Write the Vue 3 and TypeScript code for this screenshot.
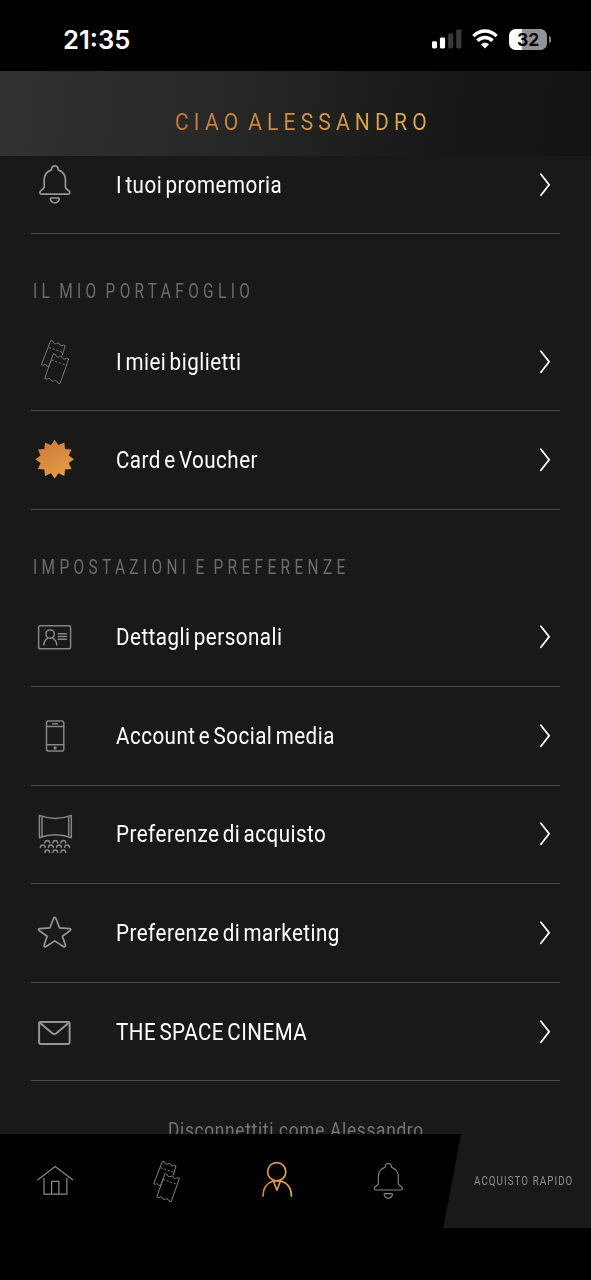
<script setup lang="ts">
import { computed } from 'vue'

type IconName = 'bell' | 'tickets' | 'burst' | 'card' | 'phone' | 'screen' | 'star' | 'mail' | 'home' | 'person'

interface Row {
  icon: IconName
  label: string
}

interface Section {
  heading?: string
  rows: Row[]
}

const sections: Section[] = [
  { rows: [{ icon: 'bell', label: 'I tuoi promemoria' }] },
  {
    heading: 'IL MIO PORTAFOGLIO',
    rows: [
      { icon: 'tickets', label: 'I miei biglietti' },
      { icon: 'burst', label: 'Card e Voucher' },
    ],
  },
  {
    heading: 'IMPOSTAZIONI E PREFERENZE',
    rows: [
      { icon: 'card', label: 'Dettagli personali' },
      { icon: 'phone', label: 'Account e Social media' },
      { icon: 'screen', label: 'Preferenze di acquisto' },
      { icon: 'star', label: 'Preferenze di marketing' },
      { icon: 'mail', label: 'THE SPACE CINEMA' },
    ],
  },
]

const tabs: IconName[] = ['home', 'tickets', 'person', 'bell']

const seats: [number, number][] = [
  [16.8, 33.5], [24.8, 33.5], [32.8, 33.5],
  [12.3, 38], [20.4, 38], [28.5, 38], [36.6, 38],
  [16.8, 43], [24.8, 43], [32.8, 43],
]

const burstPoints = computed(() =>
  Array.from({ length: 24 }, (_, i) => {
    const r = i % 2 ? 14.6 : 19.4
    const a = (i * Math.PI) / 12
    return `${(24.2 + r * Math.sin(a)).toFixed(2)},${(23.6 - r * Math.cos(a)).toFixed(2)}`
  }).join(' '),
)
</script>

<template>
  <div class="app">
    <svg class="defs" width="0" height="0" aria-hidden="true">
      <defs>
        <linearGradient id="gold" x1="0" y1="0" x2="0.5" y2="1">
          <stop offset="0" stop-color="#c87637" />
          <stop offset="1" stop-color="#e39b45" />
        </linearGradient>
        <linearGradient id="goldLine" gradientUnits="userSpaceOnUse" x1="10" y1="0" x2="39" y2="0">
          <stop offset="0" stop-color="#d58a42" />
          <stop offset="1" stop-color="#e0aa52" />
        </linearGradient>
        <symbol id="bell" viewBox="0 0 48 48">
          <path d="M20.9 9.3C20.7 4 27.9 4 27.7 9.3C32.5 11 34.9 14.7 34.9 19.2V26.2C34.9 28.8 37.6 28.8 39 30.9C39.8 32.3 38.9 33.6 37.5 33.6H11.2C9.7 33.6 8.9 32.3 9.7 30.9C11 28.8 13.7 28.8 13.7 26.2V19.2C13.7 14.7 16.1 11 20.9 9.3Z" />
          <path d="M20.8 37.4H27.8C28.6 37.4 29 38 28.7 38.8C27.5 43.4 21.1 43.4 19.9 38.8C19.7 38 20 37.4 20.8 37.4Z" />
        </symbol>
        <symbol id="tickets" viewBox="0 0 48 48">
          <path d="M20.8 22.5L18.2 29.2L16.2 28.4C15.6 26.8 13.8 26.4 12.9 27.6L11 26.9L20.2 2.9L22.6 3.7C22.7 6 25.3 6.9 27.2 5.4L29.2 6.2C29.4 8.2 31.2 8.8 32.7 7.2L34.7 8L31.6 18.2" />
          <path d="M22.9 16.2L25.2 17C25.3 19.3 28 20.2 29.8 18.7L31.5 19.3C31.7 21.5 34.2 22.3 35.9 20.5L38.2 21.3L29.5 46L27.2 45.2C26.6 42.9 24.1 42.2 22.6 43.7L20.6 43C19.9 40.8 18 40.2 16.6 41.6L14.2 40.8Z" />
          <path d="M18.3 9.9L32.2 14.8M20.8 22.4L35.8 27.5" stroke-dasharray="2.2 1.8" />
        </symbol>
        <symbol id="card" viewBox="0 0 48 48">
          <rect x="8.1" y="13.2" width="32" height="23" rx="1.8" />
          <circle cx="19.6" cy="21.5" r="4.2" />
          <path d="M13.4 32.3C13.4 28.5 15.3 26.5 17.5 25.2M21.7 25.2C24 26.5 26.2 28.5 26.2 32.3M27.7 21.2H36M27.7 23.9H36M27.7 26.6H36" />
        </symbol>
        <symbol id="phone" viewBox="0 0 48 48">
          <rect x="16" y="9.5" width="17.3" height="30" rx="2.2" />
          <path d="M16 14.8H33.3M16 33.2H33.3M22 12.1H27" />
          <circle cx="24.6" cy="36.4" r="0.9" />
        </symbol>
        <symbol id="screen" viewBox="0 0 48 48">
          <path d="M8.9 5.8C19 9.6 30.6 9.6 40.8 5.8V28.2C30.6 24.2 19 24.2 8.9 28.2ZM11.5 7V27M38.2 7V27" />
          <path v-for="([x, y], i) in seats" :key="i" :d="`M${x - 2.4} ${y}C${x - 2.4} ${y - 3.5} ${x + 2.4} ${y - 3.5} ${x + 2.4} ${y}`" />
        </symbol>
        <symbol id="star" viewBox="0 0 48 48">
          <path d="M23.1 9.6Q24.2 8 25.3 9.6L29 19.2L39.2 20.1Q41 20.5 39.8 21.9L31.9 27.7L34.9 36.7Q35 38.8 33.3 38.2L24.2 32.3L15.2 38.2Q13.4 38.8 13.6 36.7L16.6 27.7L8.6 21.9Q7.4 20.5 9.2 20.1L19.4 19.2Z" />
        </symbol>
        <symbol id="mail" viewBox="0 0 48 48">
          <rect x="8.6" y="14.4" width="30.5" height="22" rx="1.4" />
          <path d="M9 15L21.8 25.6Q23.8 27 25.8 25.6L38.7 15" />
        </symbol>
        <symbol id="home" viewBox="0 0 48 48">
          <path d="M6.9 22.8L24.2 9.5L41.6 22.8M13 21V37.2H35.9V21M20.6 37.2V24.4H27.9V37.2" />
        </symbol>
        <symbol id="person" viewBox="0 0 48 48">
          <circle cx="23.7" cy="14.7" r="9.1" />
          <path d="M10 39C10 30.5 14.7 25.8 20.3 23.8M27.2 23.8C33.8 25.8 38.4 30.5 38.4 39M20.3 24H27.4L23.9 33.2Z" />
        </symbol>
        <symbol id="burst" viewBox="0 0 48 48">
          <polygon :points="burstPoints" fill="url(#gold)" stroke="none" />
        </symbol>
      </defs>
    </svg>

    <div class="status">
      <span class="time">21:35</span>
      <div class="indicators">
        <svg class="signal" width="30" height="20" viewBox="0 0 30 20">
          <rect x="0" y="12.3" width="5" height="7.2" rx="1.4" fill="#fff" />
          <rect x="7.9" y="8.5" width="5.2" height="11" rx="1.4" fill="#fff" />
          <rect x="16.1" y="4.6" width="5.2" height="14.9" rx="1.4" fill="#3a3a3a" />
          <rect x="24.2" y="0.5" width="5.2" height="19" rx="1.4" fill="#3a3a3a" />
        </svg>
        <svg class="wifi" width="26" height="20" viewBox="0 0 26 20">
          <g fill="none" stroke="#fff" stroke-width="3.5">
            <path d="M1.4 7.1C8 0.3 18 0.3 24.6 7.1" />
            <path d="M5.5 11.8C9.8 7.5 16.2 7.5 20.5 11.8" />
          </g>
          <path d="M8.9 15.3C11.2 13.2 14.8 13.2 17.1 15.3L13 19.4Z" fill="#fff" />
        </svg>
        <div class="battery"><span>32</span></div>
        <i class="nub"></i>
      </div>
    </div>

    <header class="header"><h1>CIAO ALESSANDRO</h1></header>

    <main class="content">
      <section v-for="(section, s) in sections" :key="s">
        <h2 v-if="section.heading"><span>{{ section.heading }}</span></h2>
        <a v-for="row in section.rows" :key="row.label" class="row">
          <svg class="icon" :class="row.icon" width="48" height="48"><use :href="`#${row.icon}`" /></svg>
          <span class="label">{{ row.label }}</span>
          <svg class="chevron" width="12" height="26" viewBox="0 0 12 26">
            <path d="M1.9 2.2L10.1 12.7L1.9 23.2" />
          </svg>
        </a>
      </section>
      <p class="logout"><span>Disconnettiti come Alessandro</span></p>
    </main>

    <footer class="footer">
      <nav class="tabs">
        <a v-for="tab in tabs" :key="tab" class="tab">
          <svg class="icon" :class="[tab, { active: tab === 'person' }]" width="48" height="48"><use :href="`#${tab}`" /></svg>
        </a>
        <a class="quick"><span>ACQUISTO RAPIDO</span></a>
      </nav>
    </footer>
  </div>
</template>

<style>
body {
  margin: 0;
  background: #000;
}
</style>

<style scoped>
.app {
  width: 591px;
  height: 1280px;
  display: flex;
  flex-direction: column;
  overflow: hidden;
  background: #191919;
  color: #fff;
  font-family: Roboto, "Liberation Sans", sans-serif;
}
.defs {
  position: absolute;
}
.status {
  flex: 0 0 71px;
  box-sizing: border-box;
  display: flex;
  align-items: center;
  justify-content: space-between;
  padding: 8px 40.5px 0 63px;
  background: #000;
}
.time {
  font: 600 25.6px/30px Inter, sans-serif;
}
.indicators {
  display: flex;
  align-items: center;
}
.wifi {
  margin: 0 11px 0 10.5px;
}
.battery {
  width: 38px;
  height: 21.4px;
  border-radius: 6.5px;
  background: linear-gradient(90deg, #fff 0 34%, #929292 34%);
  color: #050505;
  text-align: center;
  font: 700 17.5px/21.4px Inter, sans-serif;
}
.nub {
  width: 2px;
  height: 7px;
  margin-left: 1.3px;
  border-radius: 0 3px 3px 0;
  background: #7b7b7b;
}
.header {
  flex: 0 0 85px;
  box-sizing: border-box;
  display: flex;
  padding: 17px 0 0 174.5px;
  background: linear-gradient(98deg, #323232 0%, #252525 45%, #171717 75%, #131313 100%);
}
h1 {
  margin: 0;
  font-size: 24.6px;
  font-weight: 400;
  line-height: 67px;
  letter-spacing: 6px;
  word-spacing: -6.5px;
  white-space: nowrap;
  transform: scaleX(0.857);
  transform-origin: 0 50%;
  background: linear-gradient(90deg, #c67a3a, #deae50);
  background-clip: text;
  -webkit-background-clip: text;
  color: transparent;
}
.content {
  flex: 1 1 0;
  min-height: 0;
  overflow: hidden;
  padding: 0 31px;
}
.content > section:first-child {
  margin-top: -20.3px;
}
h2 {
  box-sizing: border-box;
  height: 78.4px;
  margin: 0;
  padding: 37px 0 0 2px;
  color: #6c6c6c;
  font-size: 19.3px;
  font-weight: 400;
  line-height: 41px;
  letter-spacing: 5.45px;
  word-spacing: -4px;
  white-space: nowrap;
}
h2 span,
.label,
.logout span,
.quick span {
  display: inline-block;
  transform: scaleX(0.8);
  transform-origin: 0 50%;
}
.row {
  box-sizing: border-box;
  height: 98.62px;
  display: flex;
  align-items: center;
  border-bottom: 1px solid #4c4c4c;
}
.row .icon {
  margin-left: -0.7px;
  transform: translate(0.5px, -0.4px);
}
.icon {
  fill: none;
  stroke: #959595;
  stroke-width: 1.7;
  stroke-linecap: round;
  stroke-linejoin: round;
}
.icon.tickets {
  stroke: #777;
  stroke-width: 1;
  stroke-linecap: butt;
}
.icon.screen,
.icon.card,
.icon.phone {
  stroke: #858585;
  stroke-width: 1.5;
}
.icon.mail {
  stroke-width: 2;
}
.label {
  flex: 1;
  margin-left: 37.3px;
  font-size: 23.8px;
  line-height: 30px;
  letter-spacing: 0.55px;
  word-spacing: -2.6px;
  white-space: nowrap;
  transform: scaleX(0.865);
}
.chevron {
  margin-right: 9px;
  fill: none;
  stroke: #fff;
  stroke-width: 1.8;
  stroke-linecap: round;
}
.logout {
  margin: 34px 0 0;
  text-align: center;
  color: #757575;
  font-size: 20px;
  font-weight: 400;
  line-height: 30px;
  letter-spacing: 0.8px;
  white-space: nowrap;
}
.logout span {
  transform-origin: 50% 50%;
  transform: scaleX(0.865);
}
.footer {
  flex: 0 0 146px;
  background: #000;
}
.tabs {
  display: flex;
  height: 94px;
}
.tab {
  flex: none;
  width: 110.8px;
  display: flex;
  align-items: center;
  justify-content: center;
}
.tab .icon {
  stroke: #8a8a8a;
  stroke-width: 1.2;
}
.tab .tickets,
.tab .bell {
  transform: scale(0.94);
}
.tab .icon.tickets {
  stroke-width: 1;
}
.tab .icon.active {
  stroke: url(#goldLine);
  stroke-width: 1.7;
}
.quick {
  flex: 1 1 0;
  min-width: 0;
  display: flex;
  align-items: center;
  padding-left: 30.8px;
  background: #191919;
  clip-path: polygon(18px 0, 100% 0, 100% 100%, 0 100%);
  color: #8f8f8f;
  font-size: 12.2px;
  letter-spacing: 1.35px;
  white-space: nowrap;
}
</style>
